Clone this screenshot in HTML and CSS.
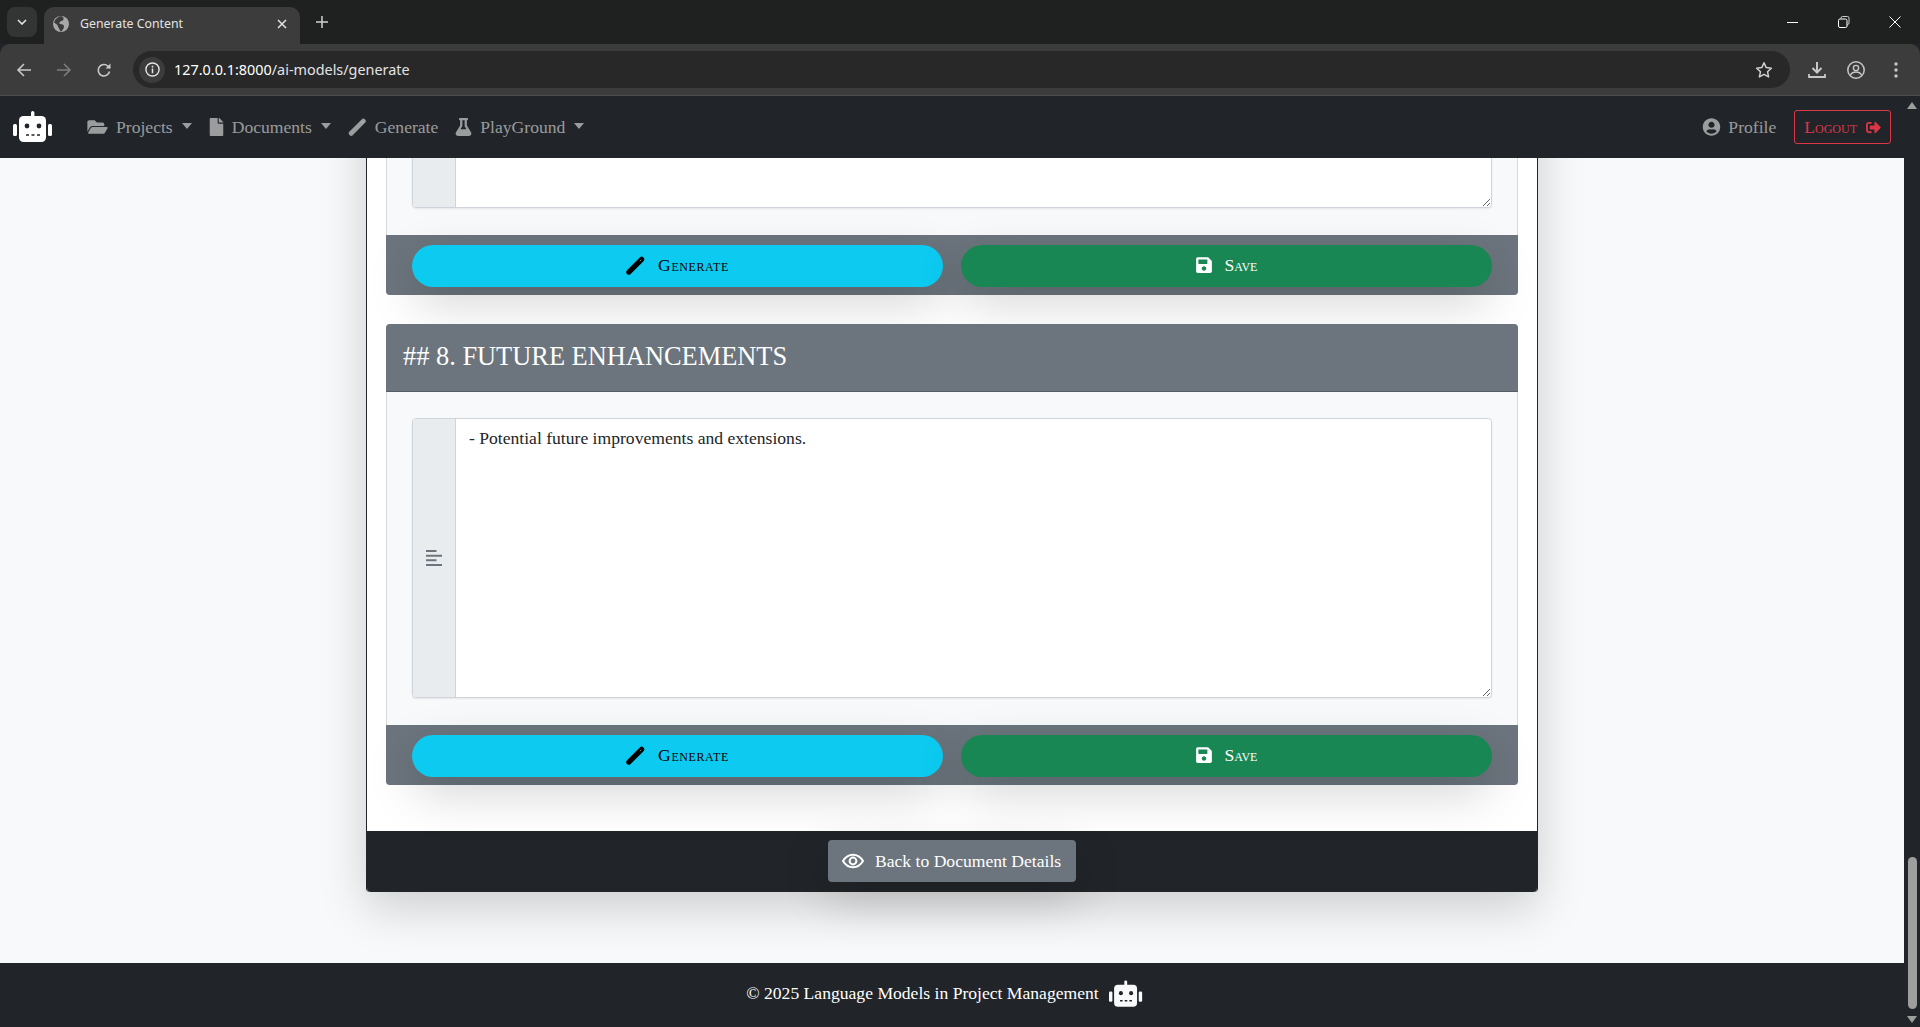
FILE: index.html
```html
<!DOCTYPE html>
<html lang="en">
<head>
    <meta charset="UTF-8">
    <title>Generate Content</title>
    <link rel="stylesheet" href="styles.css">
</head>
<body>
    <svg class="defs" aria-hidden="true">
        <symbol id="robot" viewBox="0 0 40 32">
            <rect x="18" y="0" width="3.4" height="7" rx="1.7" fill="currentColor"/>
            <rect x="0" y="13" width="4" height="12" rx="1.5" fill="currentColor"/>
            <rect x="35" y="13" width="4" height="12" rx="1.5" fill="currentColor"/>
            <rect x="6" y="5" width="27" height="26" rx="4.5" fill="currentColor"/>
            <circle cx="14" cy="15" r="2.4" fill="#212529"/>
            <circle cx="26" cy="15" r="2.4" fill="#212529"/>
            <path d="M13 24h3M18.5 24h3M24 24h3" stroke="#212529" stroke-width="1.6"/>
        </symbol>
        <symbol id="pencil" viewBox="0 0 20 20">
            <path d="M3 17L16.5 3.5" stroke="currentColor" stroke-width="5.4" stroke-linecap="round"/>
            <path d="M14.5 5.5l1.6-1.6" stroke="#fff" stroke-opacity=".55" stroke-width="1"/>
        </symbol>
        <symbol id="save" viewBox="0 0 448 512">
            <path fill="currentColor" d="M433.941 129.941l-83.882-83.882A48 48 0 0 0 316.118 32H48C21.49 32 0 53.49 0 80v352c0 26.51 21.49 48 48 48h352c26.51 0 48-21.49 48-48V163.882a48 48 0 0 0-14.059-33.941zM224 416c-35.346 0-64-28.654-64-64 0-35.346 28.654-64 64-64s64 28.654 64 64c0 35.346-28.654 64-64 64zm96-304.52V212c0 6.627-5.373 12-12 12H76c-6.627 0-12-5.373-12-12V108c0-6.627 5.373-12 12-12h228.52c3.183 0 6.235 1.264 8.485 3.515l3.48 3.48A11.996 11.996 0 0 1 320 111.48z"/>
        </symbol>
        <symbol id="lines" viewBox="0 0 16 16">
            <path d="M0 1h10.5M0 5.700h16M0 10.300h10.500M0 15h16" stroke="currentColor" stroke-width="2"/>
        </symbol>
    </svg>

    <div class="tabstrip">
        <div class="tab-menu">
            <svg class="ico-10" viewBox="0 0 10 6"><path d="M1 1l4 4 4-4" fill="none" stroke="#e3e3e3" stroke-width="1.6"/></svg>
        </div>
        <div class="tab">
            <svg class="tab-fav" viewBox="0 0 16 16"><circle cx="8" cy="8" r="8" fill="#a8a8a8"/><path d="M8 0c2 1 3 2 2.500 3.500S7 5 6.500 6.500 8 8 9.500 8.500s2 2 1 4-2 3-3 3c-.5-2-2-3-2.500-5S3 8 1 6.500C2 3 5 .5 8 0z" fill="#3c3c3c"/></svg>
            <span class="tab-title">Generate Content</span>
            <svg class="tab-close" viewBox="0 0 10 10"><path d="M1 1l8 8M9 1l-8 8" stroke="#e3e3e3" stroke-width="1.500"/></svg>
        </div>
        <svg class="tab-new" viewBox="0 0 12 12"><path d="M6 0v12M0 6h12" stroke="#d0d0d0" stroke-width="1.500"/></svg>
        <div class="window-btns">
            <svg class="win-ico" viewBox="0 0 12 12"><path d="M0 6.500h11" stroke="#fff"/></svg>
            <svg class="win-ico" viewBox="0 0 12 12"><path d="M3 2.500V2a1.500 1.500 0 0 1 1.500-1.500h5A1.500 1.500 0 0 1 11 2v5a1.500 1.500 0 0 1-1.500 1.500H9" fill="none" stroke="#ccc"/><rect x=".5" y="3" width="8.500" height="8.500" rx="1.500" fill="none" stroke="#fff"/></svg>
            <svg class="win-ico" viewBox="0 0 12 12"><path d="M.5.500l11 11M11.500.500l-11 11" stroke="#fff"/></svg>
        </div>
    </div>

    <div class="toolbar">
        <svg class="tool-ico" viewBox="0 0 16 16"><path d="M15 8H2M8 2L2 8l6 6" fill="none" stroke="#c7c7c7" stroke-width="1.600"/></svg>
        <svg class="tool-ico dim" viewBox="0 0 16 16"><path d="M1 8h13M8 2l6 6-6 6" fill="none" stroke="#7d7d7d" stroke-width="1.600"/></svg>
        <svg class="tool-ico" viewBox="0 0 16 16"><path d="M13.500 9.500A5.700 5.700 0 1 1 12 4.200L14 6" fill="none" stroke="#c7c7c7" stroke-width="1.600"/><path d="M14.500 1.500v5h-5z" fill="#c7c7c7"/></svg>
        <div class="omnibox">
            <div class="site-chip">
                <svg class="chip-ico" viewBox="0 0 16 16"><circle cx="8" cy="8" r="7" fill="none" stroke="#e3e3e3" stroke-width="1.500"/><path d="M8 7v5M8 4v1.800" stroke="#e3e3e3" stroke-width="1.600"/></svg>
            </div>
            <span class="url">127.0.0.1:8000<span class="url-path">/ai-models/generate</span></span>
            <svg class="star-ico" viewBox="0 0 18 18"><path d="M9 1.800l2.200 4.800 5.200.6-3.900 3.500 1.100 5.200L9 13.300l-4.600 2.600 1.100-5.200L1.600 7.200l5.200-.6z" fill="none" stroke="#d0d0d0" stroke-width="1.500" stroke-linejoin="round"/></svg>
        </div>
        <svg class="action-ico download" viewBox="0 0 18 18"><path d="M9 1v10M4.500 7L9 11.500 13.500 7" fill="none" stroke="#c7c7c7" stroke-width="2"/><path d="M1 13v3h16v-3" fill="none" stroke="#c7c7c7" stroke-width="1.800"/></svg>
        <svg class="action-ico" viewBox="0 0 18 18"><circle cx="9" cy="9" r="8.200" fill="none" stroke="#c7c7c7" stroke-width="1.500"/><circle cx="9" cy="7" r="2.600" fill="none" stroke="#c7c7c7" stroke-width="1.400"/><path d="M3.500 14c1-2 3-3 5.500-3s4.500 1 5.500 3" fill="none" stroke="#c7c7c7" stroke-width="1.400"/></svg>
        <svg class="action-ico dots" viewBox="0 0 4 16"><circle cx="2" cy="2" r="1.700" fill="#c7c7c7"/><circle cx="2" cy="8" r="1.700" fill="#c7c7c7"/><circle cx="2" cy="14" r="1.700" fill="#c7c7c7"/></svg>
    </div>

    <div class="viewport">
        <div class="page">
            <nav class="navbar">
                <svg class="brand"><use href="#robot"/></svg>
                <ul class="nav-list">
                    <li class="nav-item">
                        <svg class="nav-ico w21" viewBox="0 0 576 512"><path fill="currentColor" d="M572.694 292.093L500.27 416.248A63.997 63.997 0 0 1 444.989 448H45.025c-18.523 0-30.064-20.093-20.731-36.093l72.424-124.155A64 64 0 0 1 152 256h399.964c18.523 0 30.064 20.093 20.73 36.093zM152 224h328v-48c0-26.51-21.49-48-48-48H272l-64-64H48C21.49 64 0 85.49 0 112v278.046l69.077-118.418C86.214 242.25 117.989 224 152 224z"/></svg>
                        Projects<span class="caret"></span>
                    </li>
                    <li class="nav-item">
                        <svg class="nav-ico w15" viewBox="0 0 384 512"><path fill="currentColor" d="M224 136V0H24C10.700 0 0 10.700 0 24v464c0 13.300 10.700 24 24 24h336c13.300 0 24-10.700 24-24V160H248c-13.200 0-24-10.800-24-24zm160-14.100v6.100H256V0h6.100c6.400 0 12.500 2.500 17 7l97.900 98c4.500 4.500 7 10.600 7 16.900z"/></svg>
                        Documents<span class="caret"></span>
                    </li>
                    <li class="nav-item">
                        <svg class="nav-ico w19"><use href="#pencil"/></svg>
                        Generate
                    </li>
                    <li class="nav-item">
                        <svg class="nav-ico w17" viewBox="0 0 448 512"><path fill="currentColor" d="M437.200 403.500L320 215V64h8c13.300 0 24-10.700 24-24V24c0-13.300-10.700-24-24-24H120c-13.300 0-24 10.700-24 24v16c0 13.300 10.700 24 24 24h8v151L10.800 403.500C-18.500 450.600 15.300 512 70.900 512h306.200c55.700 0 89.400-61.500 60.100-108.500zM137.900 320l48.200-77.600c3.700-5.200 5.800-11.600 5.800-18.400V64h64v160c0 6.900 2.200 13.200 5.800 18.400l48.200 77.600h-172z"/></svg>
                        PlayGround<span class="caret"></span>
                    </li>
                </ul>
                <div class="nav-right">
                    <div class="nav-item profile">
                        <svg class="nav-ico w19" viewBox="0 0 496 512"><path fill="currentColor" d="M248 8C111 8 0 119 0 256s111 248 248 248 248-111 248-248S385 8 248 8zm0 96c48.600 0 88 39.400 88 88s-39.400 88-88 88-88-39.400-88-88 39.400-88 88-88zm0 344c-58.700 0-111.300-26.600-146.500-68.200 18.800-35.400 55.600-59.800 98.500-59.800 2.400 0 4.800.4 7.100 1.100 13 4.200 26.600 6.900 40.900 6.900 14.300 0 28-2.700 40.900-6.900 2.300-.7 4.700-1.100 7.100-1.100 42.900 0 79.700 24.400 98.500 59.800C359.300 421.400 306.700 448 248 448z"/></svg>
                        Profile
                    </div>
                    <button class="btn-logout">Logout
                        <svg class="logout-ico" viewBox="0 0 512 512"><path fill="currentColor" d="M497 273L329 441c-15 15-41 4.500-41-17v-96H152c-13.300 0-24-10.700-24-24v-96c0-13.300 10.700-24 24-24h136V88c0-21.400 25.900-32 41-17l168 168c9.300 9.400 9.300 24.600 0 34zM192 436v-40c0-6.600-5.400-12-12-12H96c-17.700 0-32-14.300-32-32V160c0-17.700 14.300-32 32-32h84c6.600 0 12-5.400 12-12V76c0-6.600-5.400-12-12-12H96c-53 0-96 43-96 96v192c0 53 43 96 96 96h84c6.600 0 12-5.400 12-12z"/></svg>
                    </button>
                </div>
            </nav>

            <main class="content">
                <section class="doc-panel">
                    <div class="doc-body">
                        <div class="section-card">
                            <div class="section-body">
                                <div class="input-group">
                                    <span class="input-addon"><svg class="addon-ico"><use href="#lines"/></svg></span>
                                    <textarea class="section-text" readonly></textarea>
                                </div>
                            </div>
                            <div class="section-footer">
                                <button class="pill pill-info"><svg class="pill-ico"><use href="#pencil"/></svg>Generate</button>
                                <button class="pill pill-success"><svg class="pill-ico save"><use href="#save"/></svg>Save</button>
                            </div>
                        </div>
                        <div class="section-card">
                            <h3 class="section-header">## 8. FUTURE ENHANCEMENTS</h3>
                            <div class="section-body">
                                <div class="input-group">
                                    <span class="input-addon"><svg class="addon-ico"><use href="#lines"/></svg></span>
                                    <textarea class="section-text" readonly>- Potential future improvements and extensions.</textarea>
                                </div>
                            </div>
                            <div class="section-footer">
                                <button class="pill pill-info"><svg class="pill-ico"><use href="#pencil"/></svg>Generate</button>
                                <button class="pill pill-success"><svg class="pill-ico save"><use href="#save"/></svg>Save</button>
                            </div>
                        </div>
                    </div>
                    <div class="doc-footer">
                        <button class="btn-back">
                            <svg class="eye-ico" viewBox="0 0 22 16"><path d="M1 8c2.500-4.200 6-6.300 10-6.300S18.500 3.800 21 8c-2.500 4.200-6 6.300-10 6.300S3.500 12.200 1 8z" fill="none" stroke="currentColor" stroke-width="2"/><circle cx="11" cy="8" r="3.400" fill="none" stroke="currentColor" stroke-width="2"/></svg>
                            Back to Document Details
                        </button>
                    </div>
                </section>
            </main>

            <footer class="site-footer">
                <span>© 2025 Language Models in Project Management</span>
                <svg class="footer-bot"><use href="#robot"/></svg>
            </footer>
        </div>
        <div class="scrollbar">
            <span class="arrow-up"></span>
            <span class="thumb"></span>
            <span class="arrow-down"></span>
        </div>
    </div>
</body>
</html>
```

FILE: styles.css
```css
* {
    box-sizing: border-box;
}

html, body {
    height: 100%;
}

body {
    display: flex;
    flex-direction: column;
    height: 100vh;
    margin: 0;
    overflow: hidden;
    background-color: #212529;
    font-family: "Liberation Serif", serif;
    font-size: 17.6px;
}

.defs {
    display: none;
}

/* browser chrome */
.tabstrip {
    display: flex;
    align-items: flex-end;
    flex: 0 0 44px;
    padding-left: 7px;
    background-color: #1f2020;
}

.tab-menu {
    display: flex;
    align-items: center;
    justify-content: center;
    width: 30px;
    height: 30px;
    margin-bottom: 7px;
    border-radius: 8px;
    background-color: #333434;
}

.ico-10 {
    width: 10px;
    height: 6px;
}

.tab {
    display: flex;
    align-items: center;
    width: 256px;
    height: 37px;
    margin-left: 7px;
    padding: 0 11px 4px 9px;
    border-radius: 10px 10px 0 0;
    background-color: #3c3c3c;
}

.tab-fav {
    flex: none;
    width: 16px;
    height: 16px;
}

.tab-title {
    flex: 1;
    margin-left: 11px;
    color: #e3e3e3;
    font-family: "Noto Sans", sans-serif;
    font-size: 12.3px;
}

.tab-close {
    width: 10px;
    height: 10px;
    margin-right: 2px;
}

.tab-new {
    width: 12px;
    height: 12px;
    margin: 0 0 16px 16px;
}

.window-btns {
    display: flex;
    gap: 39px;
    align-self: flex-start;
    margin: 16px 19px 0 auto;
}

.win-ico {
    width: 12px;
    height: 12px;
}

.toolbar {
    display: flex;
    align-items: center;
    flex: 0 0 52px;
    padding-left: 16px;
    border-bottom: 1px solid #4d4d4d;
    border-radius: 10px 10px 0 0;
    background-color: #3c3c3c;
}

.tool-ico {
    width: 16px;
    height: 16px;
    margin-right: 24px;
}

.omnibox {
    display: flex;
    align-items: center;
    flex: 1;
    height: 37px;
    margin-left: -3px;
    padding: 0 17px 0 6px;
    border-radius: 19px;
    background-color: #282828;
}

.site-chip {
    display: flex;
    align-items: center;
    justify-content: center;
    width: 26px;
    height: 26px;
    border-radius: 13px;
    background-color: #3c3c3c;
}

.chip-ico {
    width: 15px;
    height: 15px;
}

.url {
    margin-left: 9px;
    color: #fff;
    font-family: "Noto Sans", sans-serif;
    font-size: 14.4px;
}

.url-path {
    color: #e3e3e3;
}

.star-ico {
    width: 18px;
    height: 18px;
    margin-left: auto;
}

.action-ico {
    width: 18px;
    height: 18px;
    margin-left: 21px;
}

.action-ico.download {
    margin-left: 18px;
}

.action-ico.dots {
    width: 4px;
    margin: 0 22px 0 29px;
}

/* page */
.viewport {
    display: flex;
    flex: 1;
    min-height: 0;
}

.page {
    display: flex;
    flex-direction: column;
    flex: 1;
    min-width: 0;
    background-color: #f8f9fa;
}

.navbar {
    display: flex;
    align-items: center;
    flex: 0 0 62px;
    padding: 0 13px;
    background-color: #212529;
}

.brand {
    width: 40px;
    height: 32px;
    margin-top: -1px;
    color: #fff;
}

.nav-list {
    display: flex;
    gap: 17px;
    margin: 0 0 0 34px;
    padding: 0;
    list-style: none;
}

.nav-item {
    display: flex;
    align-items: center;
    color: rgba(255, 255, 255, 0.55);
}

.nav-ico {
    height: 18px;
    margin-right: 8px;
}

.w15 { width: 15px; }
.w17 { width: 17px; }
.w19 { width: 19px; }
.w21 { width: 21px; }

.caret {
    width: 0;
    height: 0;
    margin-left: 9px;
    margin-top: -3px;
    border-top: 6px solid currentColor;
    border-right: 5px solid transparent;
    border-left: 5px solid transparent;
}

.nav-right {
    display: flex;
    align-items: center;
    margin-left: auto;
}

.profile .nav-ico {
    margin-right: 7px;
}

.btn-logout {
    display: flex;
    align-items: center;
    height: 34px;
    margin-left: 18px;
    padding: 0 9px;
    border: 1px solid #dc3545;
    border-radius: 3px;
    background: none;
    color: #dc3545;
    font-family: inherit;
    font-size: 17.6px;
    font-variant: small-caps;
}

.logout-ico {
    width: 15px;
    height: 15px;
    margin-left: 9px;
}

.content {
    display: flex;
    flex-direction: column;
    align-items: center;
    justify-content: flex-end;
    flex: 1;
    min-height: 0;
    overflow: hidden;
    padding-bottom: 71px;
}

.doc-panel {
    flex: none;
    width: 1172px;
    border: solid #212529;
    border-width: 0 1px;
    border-radius: 4px;
    background-color: #fff;
    box-shadow: 0 16px 48px rgba(0, 0, 0, 0.175);
}

.doc-body {
    display: flex;
    flex-direction: column;
    gap: 29px;
    padding: 0 19px 46px;
}

.section-card {
    border-radius: 4px;
    background-color: #f8f9fa;
    box-shadow: inset 0 0 0 1px rgba(0, 0, 0, 0.125);
}

.section-header {
    height: 68px;
    margin: 0;
    padding: 0 17px;
    border-bottom: 1px solid rgba(0, 0, 0, 0.2);
    border-radius: 4px 4px 0 0;
    background-color: #6c757d;
    color: #fff;
    font-size: 26.4px;
    font-weight: 400;
    line-height: 64px;
}

.section-body {
    padding: 26px 26px 27px;
}

.input-group {
    display: flex;
    height: 280px;
    border: 1px solid #ced4da;
    border-radius: 4px;
    background-color: #fff;
    box-shadow: 0 1px 2px rgba(0, 0, 0, 0.075);
}

.input-addon {
    display: flex;
    align-items: center;
    justify-content: center;
    flex: 0 0 43px;
    border-right: 1px solid #ced4da;
    border-radius: 3px 0 0 3px;
    background-color: #e9ecef;
    color: #6c757d;
}

.addon-ico {
    width: 16px;
    height: 16px;
}

.section-text {
    flex: 1;
    padding: 6px 13px;
    border: 0;
    border-radius: 0 4px 4px 0;
    background-color: #fff;
    color: #212529;
    font-family: inherit;
    font-size: 17.6px;
    line-height: 1.5;
    outline: none;
}

.section-footer {
    display: flex;
    gap: 18px;
    height: 60px;
    padding: 10px 26px 8px;
    border-radius: 0 0 4px 4px;
    background-color: #6c757d;
}

.pill {
    display: flex;
    align-items: center;
    justify-content: center;
    flex: 1;
    height: 42px;
    padding: 0 0 2px;
    border: 0;
    border-radius: 21px;
    font-family: inherit;
    font-size: 17.6px;
    font-variant: small-caps;
    box-shadow: 0 16px 48px rgba(0, 0, 0, 0.175);
}

.pill-info {
    background-color: #0dcaf0;
    color: #000;
    letter-spacing: 0.6px;
}

.pill-success {
    background-color: #198754;
    color: #fff;
}

.pill-ico {
    width: 19px;
    height: 19px;
    margin-right: 13px;
}

.pill-ico.save {
    width: 16px;
    height: 18px;
}

.doc-footer {
    display: flex;
    justify-content: center;
    height: 61px;
    padding-top: 9px;
    border-radius: 0 0 4px 4px;
    background-color: #212529;
}

.btn-back {
    display: flex;
    align-items: center;
    width: 248px;
    height: 42px;
    padding: 0 14px;
    border: 0;
    border-radius: 4px;
    background-color: #6c757d;
    color: #fff;
    font-family: inherit;
    font-size: 17.6px;
    white-space: nowrap;
    box-shadow: 0 16px 48px rgba(0, 0, 0, 0.175);
}

.eye-ico {
    width: 22px;
    height: 16px;
    margin-right: 11px;
}

.site-footer {
    display: flex;
    align-items: center;
    justify-content: center;
    flex: 0 0 64px;
    padding: 0 15px 3px 0;
    background-color: #212529;
    color: #fff;
}

.footer-bot {
    width: 34px;
    height: 28px;
    margin: 0 0 -1px 10px;
    color: #f8f9fa;
}

/* window scrollbar */
.scrollbar {
    display: flex;
    flex-direction: column;
    align-items: center;
    flex: 0 0 16px;
    padding: 6px 0 4px;
    background-color: #212529;
}

.arrow-up, .arrow-down {
    width: 0;
    height: 0;
    border-right: 5px solid transparent;
    border-left: 5px solid transparent;
}

.arrow-up {
    border-bottom: 7px solid #9e9e9e;
}

.arrow-down {
    border-top: 7px solid #9e9e9e;
}

.thumb {
    width: 9px;
    height: 152px;
    margin: auto 0 7px;
    border-radius: 5px;
    background-color: #9e9e9e;
}
```
